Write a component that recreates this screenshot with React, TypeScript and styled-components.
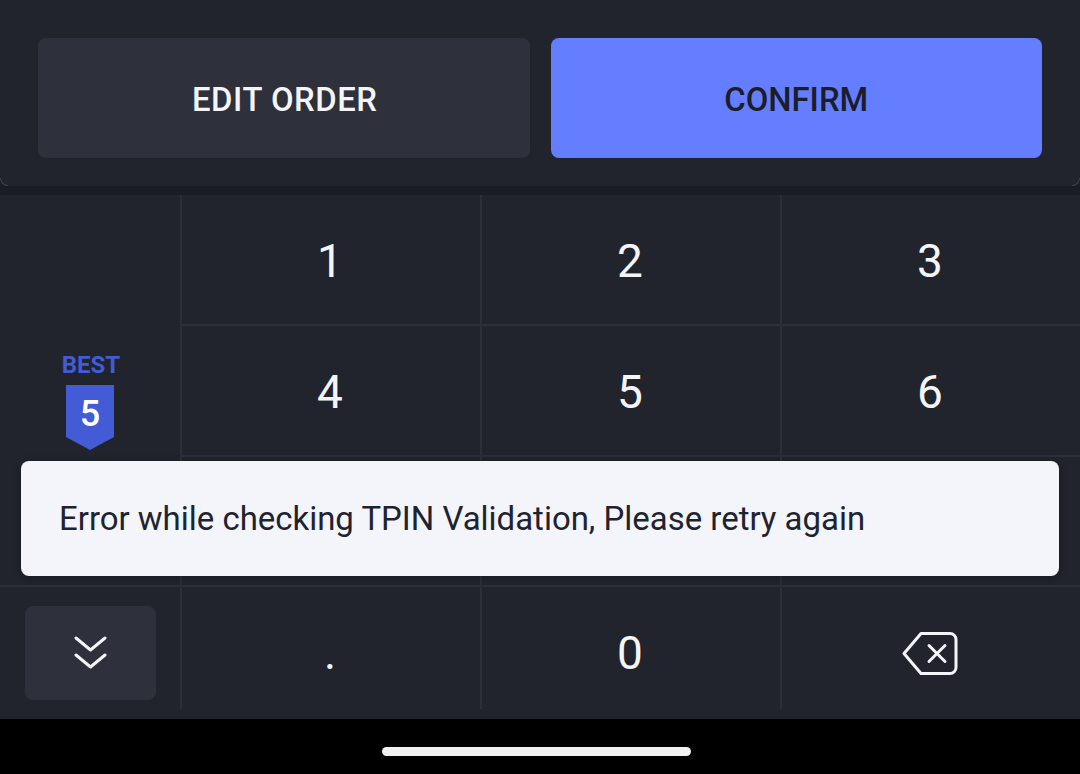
import React from "react";
import styled, { createGlobalStyle } from "styled-components";

const Global = createGlobalStyle`
  html, body { margin: 0; padding: 0; background: #000; }
  body { font-family: Roboto, "Liberation Sans", sans-serif; }
`;

const Screen = styled.div`
  position: relative;
  width: 1080px;
  height: 774px;
  overflow: hidden;
  display: flex;
  flex-direction: column;
  background: #000;
`;

const Surface = styled.div`
  height: 719px;
  display: flex;
  flex-direction: column;
  background: #1a1d25;
`;

const ActionPanel = styled.div`
  position: relative;
  height: 186px;
  box-sizing: border-box;
  padding: 38px 38px 28px;
  display: flex;
  gap: 21px;
  background: #21242c;
  border-radius: 0 0 8px 8px;
  &::before,
  &::after {
    content: "";
    position: absolute;
    bottom: 0;
    width: 8px;
    height: 8px;
    box-sizing: border-box;
    border-bottom: 1px solid #3f434e;
  }
  &::before {
    left: 0;
    border-left: 1px solid #3f434e;
    border-bottom-left-radius: 8px;
  }
  &::after {
    right: 0;
    border-right: 1px solid #3f434e;
    border-bottom-right-radius: 8px;
  }
`;

const ActionButton = styled.button<{ $primary?: boolean }>`
  flex: 1 1 0;
  height: 120px;
  border: 0;
  padding: 3px 0 0;
  border-radius: 8px;
  font-family: Roboto, sans-serif;
  font-weight: 500;
  font-size: 32.8px;
  letter-spacing: ${(p) => (p.$primary ? "0" : "0.55px")};
  text-indent: ${(p) => (p.$primary ? "0" : "2px")};
  background: ${(p) => (p.$primary ? "#657dff" : "#2e303b")};
  color: ${(p) => (p.$primary ? "#1b1e28" : "#f4f5f9")};
`;

const Pad = styled.div`
  margin-top: 9px;
  height: 524px;
  background: #21242c;
  display: grid;
  grid-template-columns: 182px 300px 300px 298px;
  grid-template-rows: 131px 131px 130px 122px 10px;
`;

const SideCell = styled.div<{ $rows: number }>`
  grid-row: span ${(p) => p.$rows};
  box-sizing: border-box;
  border-right: 2px solid #2c2f39;
`;

const BestCell = styled(SideCell)`
  display: flex;
  flex-direction: column;
  align-items: center;
  padding-top: 157px;
`;

const BestLabel = styled.div`
  font-size: 24px;
  line-height: 27px;
  font-weight: 700;
  color: #435bd5;
  padding-left: 2px;
`;

const Shield = styled.div`
  position: relative;
  margin-top: 6px;
  width: 48px;
  height: 65px;
  display: flex;
  justify-content: center;
`;

const ShieldArt = styled.svg`
  position: absolute;
  inset: 0;
`;

const ShieldDigit = styled.span`
  position: relative;
  font-size: 36px;
  line-height: 58px;
  font-weight: 500;
  color: #fff;
`;

const CollapseCell = styled(SideCell)`
  margin-top: -2px;
  border-top: 2px solid #2c2f39;
  padding: 19px 0 0 25px;
`;

const CollapseButton = styled.div`
  width: 131px;
  height: 94px;
  border-radius: 8px;
  background: #2e303b;
  display: flex;
  align-items: center;
  justify-content: center;
`;

const Key = styled.div<{ $last?: boolean }>`
  box-sizing: border-box;
  display: flex;
  align-items: center;
  justify-content: center;
  padding: 3px 2px 0 0;
  font-size: 46px;
  color: #f4f5f9;
  border-right: ${(p) => (p.$last ? "0" : "2px solid #2c2f39")};
  border-bottom: 2px solid #2c2f39;
`;

const BottomKey = styled(Key)`
  border-bottom: 0;
  padding-top: 10px;
`;

const PadFoot = styled.div`
  grid-column: 1 / -1;
  background: #21242c;
`;

const Toast = styled.div`
  position: absolute;
  left: 21px;
  top: 461px;
  width: 1038px;
  height: 115px;
  box-sizing: border-box;
  padding: 0 38px;
  display: flex;
  align-items: center;
  border-radius: 8px;
  background: #f3f5fb;
  color: #1f2330;
  font-size: 32.95px;
  box-shadow: 0 2px 8px rgba(0, 0, 0, 0.3);
`;

const NavBar = styled.div`
  flex: 1;
  background: #000;
  position: relative;
`;

const HomePill = styled.div`
  position: absolute;
  left: 382px;
  top: 28px;
  width: 309px;
  height: 9px;
  border-radius: 5px;
  background: #f1f1f1;
`;

const Chevrons = () => (
  <svg width="33" height="34" viewBox="0 0 33 34" fill="none" stroke="#f4f5f9" strokeWidth="3" strokeLinecap="round" strokeLinejoin="round">
    <path d="M2 2 L16.5 14 L31 2" />
    <path d="M2 19 L16.5 31 L31 19" />
  </svg>
);

const BackspaceIcon = () => (
  <svg width="56" height="43" viewBox="0 0 56 43" fill="none" stroke="#f4f5f9" strokeWidth="3" strokeLinecap="round" strokeLinejoin="round">
    <path d="M19 1.5 H48 A6 6 0 0 1 54 7.5 V35.5 A6 6 0 0 1 48 41.5 H19 L2 21.5 Z" />
    <path d="M27 13.5 L43 29.5 M43 13.5 L27 29.5" />
  </svg>
);

export default function App() {
  return (
    <Screen>
      <Global />
      <Surface>
        <ActionPanel>
          <ActionButton>EDIT ORDER</ActionButton>
          <ActionButton $primary>CONFIRM</ActionButton>
        </ActionPanel>
        <Pad>
          <BestCell $rows={3}>
            <BestLabel>BEST</BestLabel>
            <Shield>
              <ShieldArt width="48" height="65" viewBox="0 0 48 65">
                <path d="M0 0 H48 V52 L24 65 L0 52 Z" fill="#435bd5" />
              </ShieldArt>
              <ShieldDigit>5</ShieldDigit>
            </Shield>
          </BestCell>
          <Key>1</Key>
          <Key>2</Key>
          <Key $last>3</Key>
          <Key>4</Key>
          <Key>5</Key>
          <Key $last>6</Key>
          <Key />
          <Key />
          <Key $last />
          <CollapseCell $rows={1}>
            <CollapseButton>
              <Chevrons />
            </CollapseButton>
          </CollapseCell>
          <BottomKey>.</BottomKey>
          <BottomKey>0</BottomKey>
          <BottomKey $last>
            <BackspaceIcon />
          </BottomKey>
          <PadFoot />
        </Pad>
      </Surface>
      <NavBar>
        <HomePill />
      </NavBar>
      <Toast>Error while checking TPIN Validation, Please retry again</Toast>
    </Screen>
  );
}
